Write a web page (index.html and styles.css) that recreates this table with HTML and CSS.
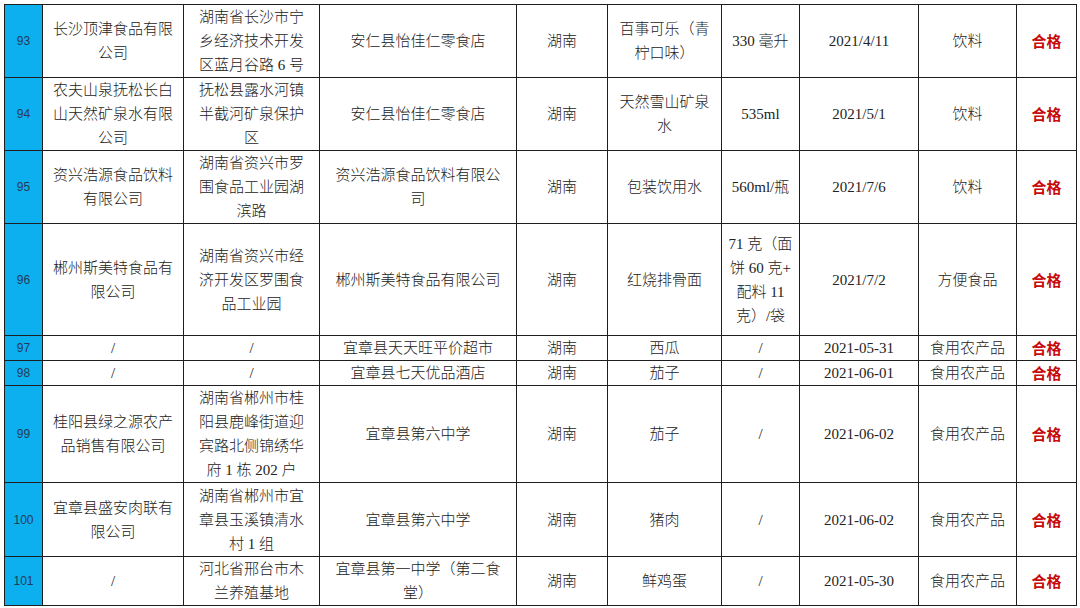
FILE: index.html
```html
<!DOCTYPE html>
<html lang="zh-CN">
<head>
<meta charset="utf-8">
<title>抽检结果</title>
<link rel="stylesheet" href="styles.css">
</head>
<body>
<table class="grid">
  <colgroup>
    <col class="c-no"><col class="c-maker"><col class="c-addr"><col class="c-shop"><col class="c-prov"><col class="c-name"><col class="c-spec"><col class="c-date"><col class="c-cat"><col class="c-res">
  </colgroup>
  <tbody>
    <tr class="h72">
      <td class="no">93</td>
      <td>长沙顶津食品有限<br>公司</td>
      <td>湖南省长沙市宁<br>乡经济技术开发<br>区蓝月谷路 6 号</td>
      <td>安仁县怡佳仁零食店</td>
      <td>湖南</td>
      <td>百事可乐（青<br>柠口味）</td>
      <td>330 毫升</td>
      <td>2021/4/11</td>
      <td>饮料</td>
      <td class="ok">合格</td>
    </tr>
    <tr class="h74">
      <td class="no">94</td>
      <td>农夫山泉抚松长白<br>山天然矿泉水有限<br>公司</td>
      <td>抚松县露水河镇<br>半截河矿泉保护<br>区</td>
      <td>安仁县怡佳仁零食店</td>
      <td>湖南</td>
      <td>天然雪山矿泉<br>水</td>
      <td>535ml</td>
      <td>2021/5/1</td>
      <td>饮料</td>
      <td class="ok">合格</td>
    </tr>
    <tr class="h73">
      <td class="no">95</td>
      <td>资兴浩源食品饮料<br>有限公司</td>
      <td>湖南省资兴市罗<br>围食品工业园湖<br>滨路</td>
      <td>资兴浩源食品饮料有限公<br>司</td>
      <td>湖南</td>
      <td>包装饮用水</td>
      <td>560ml/瓶</td>
      <td>2021/7/6</td>
      <td>饮料</td>
      <td class="ok">合格</td>
    </tr>
    <tr class="h113">
      <td class="no">96</td>
      <td>郴州斯美特食品有<br>限公司</td>
      <td>湖南省资兴市经<br>济开发区罗围食<br>品工业园</td>
      <td>郴州斯美特食品有限公司</td>
      <td>湖南</td>
      <td>红烧排骨面</td>
      <td>71 克（面<br>饼 60 克+<br>配料 11<br>克）/袋</td>
      <td>2021/7/2</td>
      <td>方便食品</td>
      <td class="ok">合格</td>
    </tr>
    <tr class="h24">
      <td class="no">97</td>
      <td>/</td>
      <td>/</td>
      <td>宜章县天天旺平价超市</td>
      <td>湖南</td>
      <td>西瓜</td>
      <td>/</td>
      <td>2021-05-31</td>
      <td>食用农产品</td>
      <td class="ok">合格</td>
    </tr>
    <tr class="h25">
      <td class="no">98</td>
      <td>/</td>
      <td>/</td>
      <td>宜章县七天优品酒店</td>
      <td>湖南</td>
      <td>茄子</td>
      <td>/</td>
      <td>2021-06-01</td>
      <td>食用农产品</td>
      <td class="ok">合格</td>
    </tr>
    <tr class="h98">
      <td class="no">99</td>
      <td>桂阳县绿之源农产<br>品销售有限公司</td>
      <td>湖南省郴州市桂<br>阳县鹿峰街道迎<br>宾路北侧锦绣华<br>府 1 栋 202 户</td>
      <td>宜章县第六中学</td>
      <td>湖南</td>
      <td>茄子</td>
      <td>/</td>
      <td>2021-06-02</td>
      <td>食用农产品</td>
      <td class="ok">合格</td>
    </tr>
    <tr class="h75">
      <td class="no">100</td>
      <td>宜章县盛安肉联有<br>限公司</td>
      <td>湖南省郴州市宜<br>章县玉溪镇清水<br>村 1 组</td>
      <td>宜章县第六中学</td>
      <td>湖南</td>
      <td>猪肉</td>
      <td>/</td>
      <td>2021-06-02</td>
      <td>食用农产品</td>
      <td class="ok">合格</td>
    </tr>
    <tr class="h48">
      <td class="no">101</td>
      <td>/</td>
      <td>河北省邢台市木<br>兰养殖基地</td>
      <td>宜章县第一中学（第二食<br>堂）</td>
      <td>湖南</td>
      <td>鲜鸡蛋</td>
      <td>/</td>
      <td>2021-05-30</td>
      <td>食用农产品</td>
      <td class="ok">合格</td>
    </tr>
  </tbody>
</table>
</body>
</html>
```

FILE: styles.css
```css
html, body {
  margin: 0;
  padding: 0;
  background: #ffffff;
}

body {
  padding: 4px 0 0 4px;
  font-family: "Liberation Serif", "Noto Sans CJK SC", serif;
  font-size: 15px;
  font-weight: 300;
  color: #222222;
}

.grid {
  border-collapse: collapse;
  table-layout: fixed;
  width: 1072px;
}

.c-no { width: 38px; }
.c-maker { width: 141px; }
.c-addr { width: 136px; }
.c-shop { width: 197px; }
.c-prov { width: 91px; }
.c-name { width: 114px; }
.c-spec { width: 78px; }
.c-date { width: 119px; }
.c-cat { width: 98px; }
.c-res { width: 60px; }

.grid td {
  border: 1px solid #1e1e1e;
  padding: 0 4px;
  text-align: center;
  vertical-align: middle;
  line-height: 24px;
  white-space: nowrap;
  overflow: hidden;
}

.grid td.no {
  background: #0cb0ef;
  font-family: "Liberation Sans", "Noto Sans", sans-serif;
  font-size: 12px;
  font-weight: 400;
  color: #243a58;
  padding: 0;
}

.grid td.ok {
  color: #c80a0a;
  font-family: "Noto Sans CJK SC", sans-serif;
  font-weight: 700;
}

.h24 { height: 23px; }
.h25 { height: 24px; }
.h48 { height: 47px; }
.h72 { height: 71px; }
.h73 { height: 72px; }
.h74 { height: 73px; }
.h75 { height: 74px; }
.h98 { height: 97px; }
.h113 { height: 112px; }
```
